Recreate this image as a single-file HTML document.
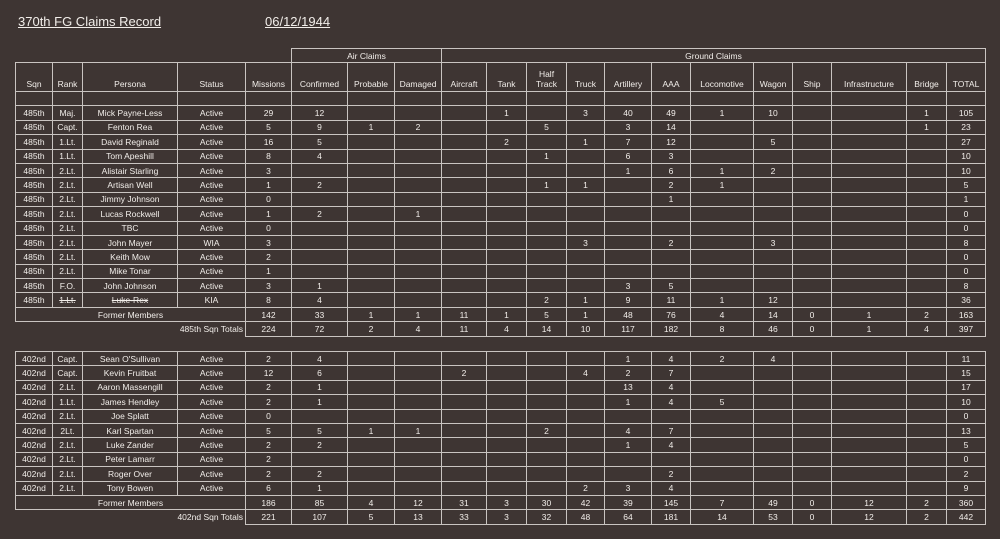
<!DOCTYPE html>
<html><head><meta charset="utf-8"><style>
html,body{margin:0;padding:0;background:#3e3533;width:1000px;height:539px;overflow:hidden;font-family:"Liberation Sans",sans-serif;color:#f2eeea}
.t{position:absolute;left:18px;top:14px;font-size:13px;text-decoration:underline}
.d{position:absolute;left:265px;top:14px;font-size:13px;text-decoration:underline}
table{position:absolute;left:15px;border-collapse:collapse;table-layout:fixed;font-size:8.5px}
td{border:1px solid #c9c4c1;text-align:center;padding:0;height:13.4px;line-height:10px;white-space:nowrap;overflow:hidden}
td.n{border:none}
tr.h td{height:26px;vertical-align:bottom;padding-bottom:2px}
tr.g td{height:13px}
.r{text-align:right;padding-right:2px}
s{text-decoration:line-through}
</style></head><body>
<div class="t">370th FG Claims Record</div>
<div class="d">06/12/1944</div>
<table style="top:48px">
<colgroup><col style="width:37px"><col style="width:30px"><col style="width:95px"><col style="width:68px"><col style="width:46px"><col style="width:56px"><col style="width:47px"><col style="width:47px"><col style="width:45px"><col style="width:40px"><col style="width:40px"><col style="width:38px"><col style="width:47px"><col style="width:39px"><col style="width:63px"><col style="width:39px"><col style="width:39px"><col style="width:75px"><col style="width:40px"><col style="width:39px"></colgroup>
<tr class="g"><td class="n" colspan="5" style="border-bottom:1px solid #c9c4c1"></td><td colspan="3">Air Claims</td><td colspan="12">Ground Claims</td></tr>
<tr class="h"><td>Sqn</td><td>Rank</td><td>Persona</td><td>Status</td><td>Missions</td><td>Confirmed</td><td>Probable</td><td>Damaged</td><td>Aircraft</td><td>Tank</td><td>Half<br>Track</td><td>Truck</td><td>Artillery</td><td>AAA</td><td>Locomotive</td><td>Wagon</td><td>Ship</td><td>Infrastructure</td><td>Bridge</td><td>TOTAL</td></tr>
<tr><td></td><td></td><td></td><td></td><td></td><td></td><td></td><td></td><td></td><td></td><td></td><td></td><td></td><td></td><td></td><td></td><td></td><td></td><td></td><td></td></tr>
<tr><td>485th</td><td>Maj.</td><td>Mick Payne-Less</td><td>Active</td><td>29</td><td>12</td><td></td><td></td><td></td><td>1</td><td></td><td>3</td><td>40</td><td>49</td><td>1</td><td>10</td><td></td><td></td><td>1</td><td>105</td></tr>
<tr><td>485th</td><td>Capt.</td><td>Fenton Rea</td><td>Active</td><td>5</td><td>9</td><td>1</td><td>2</td><td></td><td></td><td>5</td><td></td><td>3</td><td>14</td><td></td><td></td><td></td><td></td><td>1</td><td>23</td></tr>
<tr><td>485th</td><td>1.Lt.</td><td>David Reginald</td><td>Active</td><td>16</td><td>5</td><td></td><td></td><td></td><td>2</td><td></td><td>1</td><td>7</td><td>12</td><td></td><td>5</td><td></td><td></td><td></td><td>27</td></tr>
<tr><td>485th</td><td>1.Lt.</td><td>Tom Apeshill</td><td>Active</td><td>8</td><td>4</td><td></td><td></td><td></td><td></td><td>1</td><td></td><td>6</td><td>3</td><td></td><td></td><td></td><td></td><td></td><td>10</td></tr>
<tr><td>485th</td><td>2.Lt.</td><td>Alistair Starling</td><td>Active</td><td>3</td><td></td><td></td><td></td><td></td><td></td><td></td><td></td><td>1</td><td>6</td><td>1</td><td>2</td><td></td><td></td><td></td><td>10</td></tr>
<tr><td>485th</td><td>2.Lt.</td><td>Artisan Well</td><td>Active</td><td>1</td><td>2</td><td></td><td></td><td></td><td></td><td>1</td><td>1</td><td></td><td>2</td><td>1</td><td></td><td></td><td></td><td></td><td>5</td></tr>
<tr><td>485th</td><td>2.Lt.</td><td>Jimmy Johnson</td><td>Active</td><td>0</td><td></td><td></td><td></td><td></td><td></td><td></td><td></td><td></td><td>1</td><td></td><td></td><td></td><td></td><td></td><td>1</td></tr>
<tr><td>485th</td><td>2.Lt.</td><td>Lucas Rockwell</td><td>Active</td><td>1</td><td>2</td><td></td><td>1</td><td></td><td></td><td></td><td></td><td></td><td></td><td></td><td></td><td></td><td></td><td></td><td>0</td></tr>
<tr><td>485th</td><td>2.Lt.</td><td>TBC</td><td>Active</td><td>0</td><td></td><td></td><td></td><td></td><td></td><td></td><td></td><td></td><td></td><td></td><td></td><td></td><td></td><td></td><td>0</td></tr>
<tr><td>485th</td><td>2.Lt.</td><td>John Mayer</td><td>WIA</td><td>3</td><td></td><td></td><td></td><td></td><td></td><td></td><td>3</td><td></td><td>2</td><td></td><td>3</td><td></td><td></td><td></td><td>8</td></tr>
<tr><td>485th</td><td>2.Lt.</td><td>Keith Mow</td><td>Active</td><td>2</td><td></td><td></td><td></td><td></td><td></td><td></td><td></td><td></td><td></td><td></td><td></td><td></td><td></td><td></td><td>0</td></tr>
<tr><td>485th</td><td>2.Lt.</td><td>Mike Tonar</td><td>Active</td><td>1</td><td></td><td></td><td></td><td></td><td></td><td></td><td></td><td></td><td></td><td></td><td></td><td></td><td></td><td></td><td>0</td></tr>
<tr><td>485th</td><td>F.O.</td><td>John Johnson</td><td>Active</td><td>3</td><td>1</td><td></td><td></td><td></td><td></td><td></td><td></td><td>3</td><td>5</td><td></td><td></td><td></td><td></td><td></td><td>8</td></tr>
<tr><td>485th</td><td><s>1.Lt.</s></td><td><s>Luke-Rex</s></td><td>KIA</td><td>8</td><td>4</td><td></td><td></td><td></td><td></td><td>2</td><td>1</td><td>9</td><td>11</td><td>1</td><td>12</td><td></td><td></td><td></td><td>36</td></tr>
<tr><td colspan="4">Former Members</td><td>142</td><td>33</td><td>1</td><td>1</td><td>11</td><td>1</td><td>5</td><td>1</td><td>48</td><td>76</td><td>4</td><td>14</td><td>0</td><td>1</td><td>2</td><td>163</td></tr>
<tr><td class="n r" colspan="4" style="border-right:1px solid #c9c4c1">485th Sqn Totals</td><td>224</td><td>72</td><td>2</td><td>4</td><td>11</td><td>4</td><td>14</td><td>10</td><td>117</td><td>182</td><td>8</td><td>46</td><td>0</td><td>1</td><td>4</td><td>397</td></tr>
</table>
<table style="top:351px">
<colgroup><col style="width:37px"><col style="width:30px"><col style="width:95px"><col style="width:68px"><col style="width:46px"><col style="width:56px"><col style="width:47px"><col style="width:47px"><col style="width:45px"><col style="width:40px"><col style="width:40px"><col style="width:38px"><col style="width:47px"><col style="width:39px"><col style="width:63px"><col style="width:39px"><col style="width:39px"><col style="width:75px"><col style="width:40px"><col style="width:39px"></colgroup>
<tr><td>402nd</td><td>Capt.</td><td>Sean O'Sullivan</td><td>Active</td><td>2</td><td>4</td><td></td><td></td><td></td><td></td><td></td><td></td><td>1</td><td>4</td><td>2</td><td>4</td><td></td><td></td><td></td><td>11</td></tr>
<tr><td>402nd</td><td>Capt.</td><td>Kevin Fruitbat</td><td>Active</td><td>12</td><td>6</td><td></td><td></td><td>2</td><td></td><td></td><td>4</td><td>2</td><td>7</td><td></td><td></td><td></td><td></td><td></td><td>15</td></tr>
<tr><td>402nd</td><td>2.Lt.</td><td>Aaron Massengill</td><td>Active</td><td>2</td><td>1</td><td></td><td></td><td></td><td></td><td></td><td></td><td>13</td><td>4</td><td></td><td></td><td></td><td></td><td></td><td>17</td></tr>
<tr><td>402nd</td><td>1.Lt.</td><td>James Hendley</td><td>Active</td><td>2</td><td>1</td><td></td><td></td><td></td><td></td><td></td><td></td><td>1</td><td>4</td><td>5</td><td></td><td></td><td></td><td></td><td>10</td></tr>
<tr><td>402nd</td><td>2.Lt.</td><td>Joe Splatt</td><td>Active</td><td>0</td><td></td><td></td><td></td><td></td><td></td><td></td><td></td><td></td><td></td><td></td><td></td><td></td><td></td><td></td><td>0</td></tr>
<tr><td>402nd</td><td>2Lt.</td><td>Karl Spartan</td><td>Active</td><td>5</td><td>5</td><td>1</td><td>1</td><td></td><td></td><td>2</td><td></td><td>4</td><td>7</td><td></td><td></td><td></td><td></td><td></td><td>13</td></tr>
<tr><td>402nd</td><td>2.Lt.</td><td>Luke Zander</td><td>Active</td><td>2</td><td>2</td><td></td><td></td><td></td><td></td><td></td><td></td><td>1</td><td>4</td><td></td><td></td><td></td><td></td><td></td><td>5</td></tr>
<tr><td>402nd</td><td>2.Lt.</td><td>Peter Lamarr</td><td>Active</td><td>2</td><td></td><td></td><td></td><td></td><td></td><td></td><td></td><td></td><td></td><td></td><td></td><td></td><td></td><td></td><td>0</td></tr>
<tr><td>402nd</td><td>2.Lt.</td><td>Roger Over</td><td>Active</td><td>2</td><td>2</td><td></td><td></td><td></td><td></td><td></td><td></td><td></td><td>2</td><td></td><td></td><td></td><td></td><td></td><td>2</td></tr>
<tr><td>402nd</td><td>2.Lt.</td><td>Tony Bowen</td><td>Active</td><td>6</td><td>1</td><td></td><td></td><td></td><td></td><td></td><td>2</td><td>3</td><td>4</td><td></td><td></td><td></td><td></td><td></td><td>9</td></tr>
<tr><td colspan="4">Former Members</td><td>186</td><td>85</td><td>4</td><td>12</td><td>31</td><td>3</td><td>30</td><td>42</td><td>39</td><td>145</td><td>7</td><td>49</td><td>0</td><td>12</td><td>2</td><td>360</td></tr>
<tr><td class="n r" colspan="4" style="border-right:1px solid #c9c4c1">402nd Sqn Totals</td><td>221</td><td>107</td><td>5</td><td>13</td><td>33</td><td>3</td><td>32</td><td>48</td><td>64</td><td>181</td><td>14</td><td>53</td><td>0</td><td>12</td><td>2</td><td>442</td></tr>
</table>
</body></html>
